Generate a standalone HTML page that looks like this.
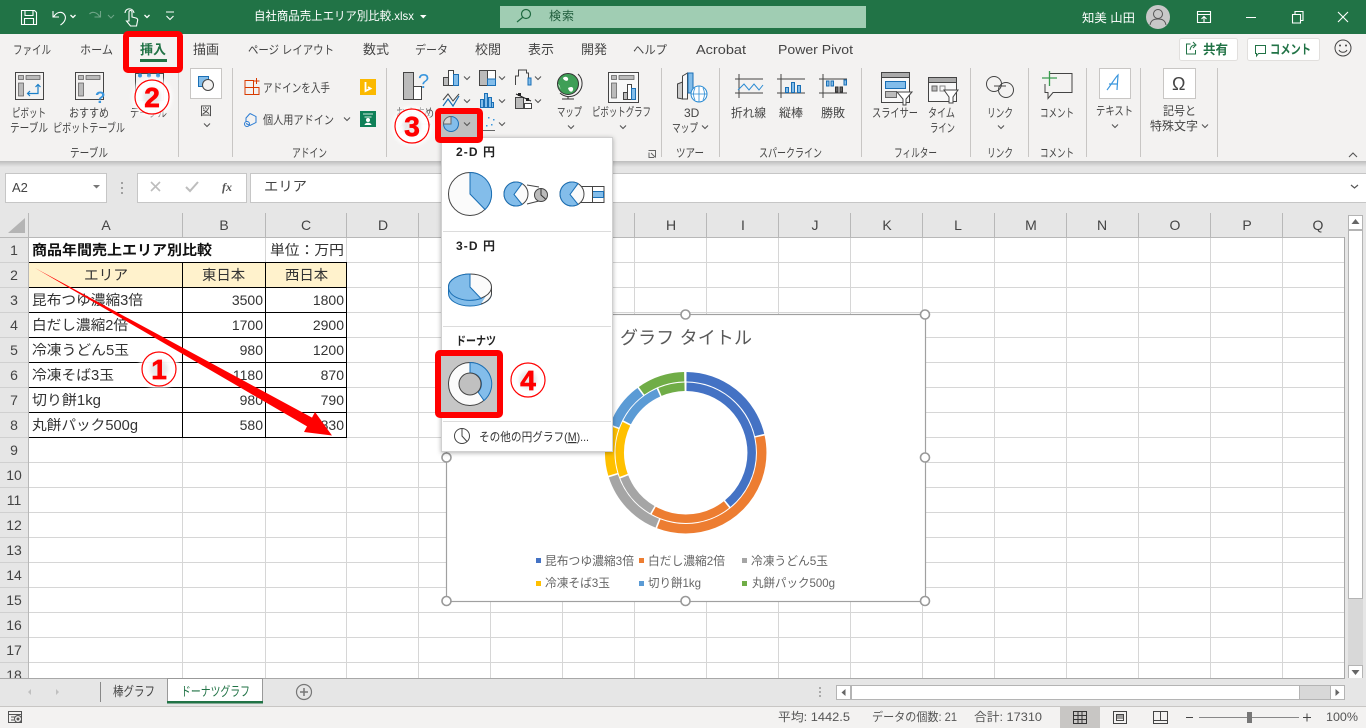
<!DOCTYPE html>
<html lang="ja"><head><meta charset="utf-8"><title>Excel</title>
<style>
html,body{margin:0;padding:0;width:1366px;height:728px;overflow:hidden;background:#e6e6e6}
svg{display:block;position:absolute;left:0;top:0}
text{font-family:"Liberation Sans","Noto Sans CJK JP",sans-serif;white-space:pre}
.r{font-size:12px;fill:#444}
.k{font-size:13px;fill:#444}
.w{font-size:12px;fill:#fff}
.c{font-size:14.4px;fill:#333}
.n{font-size:14px;fill:#333;text-anchor:end}
.h{font-size:14px;fill:#444;text-anchor:middle}
.l{font-size:12px;fill:#666}
.s{font-size:12px;fill:#555}
.m{font-size:12px;fill:#222;font-weight:bold}
.d{font-size:28px;fill:#f00;stroke:#f00;stroke-width:.7px;font-weight:bold;text-anchor:middle}
.ic{fill:none;stroke:#444;stroke-width:1}
.g{fill:#bbb;stroke:#444;stroke-width:1}
.b{fill:#83bdea;stroke:#1a6fb5;stroke-width:1}
</style></head><body>
<svg width="1366" height="728" viewBox="0 0 1366 728" xmlns="http://www.w3.org/2000/svg">
<defs>
<path id="ch" d="M-3-1.500 0 1.500 3-1.500" fill="none" stroke="#555" stroke-width="1.100"/>
<path id="chw" d="M-2.500-1 0 1.500 2.500-1" fill="none" stroke="#fff" stroke-width="1.300"/>
<filter id="sh" x="-10%" y="-10%" width="120%" height="120%"><feDropShadow dx="0" dy="1" stdDeviation="2.500" flood-color="#000" flood-opacity=".3"/></filter>
<filter id="bl" x="-30%" y="-30%" width="160%" height="160%"><feGaussianBlur stdDeviation="1.500"/></filter>
<linearGradient id="rs" x1="0" y1="0" x2="0" y2="1"><stop offset="0" stop-color="#bdbdbd"/><stop offset="1" stop-color="#e6e6e6"/></linearGradient>
</defs>

<!-- base -->
<rect width="1366" height="728" fill="#e6e6e6"/>
<rect x="29" y="238" width="1316" height="440" fill="#fff"/>

<!-- gridlines -->
<g stroke="#d6d6d6" stroke-width="1" fill="none">
<path d="M29 262.500H1345M29 287.500H1345M29 312.500H1345M29 337.500H1345M29 362.500H1345M29 387.500H1345M29 412.500H1345M29 437.500H1345M29 462.500H1345M29 487.500H1345M29 512.500H1345M29 537.500H1345M29 562.500H1345M29 587.500H1345M29 612.500H1345M29 637.500H1345M29 662.500H1345"/>
<path d="M182.500 238V678M265.500 238V678M346.500 238V678M418.500 238V678M490.500 238V678M562.500 238V678M634.500 238V678M706.500 238V678M778.500 238V678M850.500 238V678M922.500 238V678M994.500 238V678M1066.500 238V678M1138.500 238V678M1210.500 238V678M1282.500 238V678"/>
</g>

<!-- headers -->
<rect x="0" y="213" width="1345" height="25" fill="#e6e6e6"/>
<rect x="0" y="238" width="29" height="440" fill="#e6e6e6"/>
<path d="M25 233H8L25 218Z" fill="#b4b4b4"/>
<g stroke="#b8b8b8" fill="none">
<path d="M28.500 213V678M0 237.500H1345M182.500 213V237M265.500 213V237M346.500 213V237M418.500 213V237M490.500 213V237M562.500 213V237M634.500 213V237M706.500 213V237M778.500 213V237M850.500 213V237M922.500 213V237M994.500 213V237M1066.500 213V237M1138.500 213V237M1210.500 213V237M1282.500 213V237"/>
<path d="M0 262.500H28M0 287.500H28M0 312.500H28M0 337.500H28M0 362.500H28M0 387.500H28M0 412.500H28M0 437.500H28M0 462.500H28M0 487.500H28M0 512.500H28M0 537.500H28M0 562.500H28M0 587.500H28M0 612.500H28M0 637.500H28M0 662.500H28" stroke="#d0d0d0"/>
</g>
<g>
<text class="h" x="106" y="230">A</text><text class="h" x="224" y="230">B</text><text class="h" x="306" y="230">C</text><text class="h" x="383" y="230">D</text>
<text class="h" x="671" y="230">H</text><text class="h" x="743" y="230">I</text><text class="h" x="815" y="230">J</text><text class="h" x="887" y="230">K</text><text class="h" x="958" y="230">L</text><text class="h" x="1031" y="230">M</text><text class="h" x="1102" y="230">N</text><text class="h" x="1175" y="230">O</text><text class="h" x="1247" y="230">P</text><text class="h" x="1318" y="230">Q</text>
<text class="h" x="14" y="255">1</text><text class="h" x="14" y="280">2</text><text class="h" x="14" y="305">3</text><text class="h" x="14" y="330">4</text><text class="h" x="14" y="355">5</text><text class="h" x="14" y="380">6</text><text class="h" x="14" y="405">7</text><text class="h" x="14" y="430">8</text><text class="h" x="14" y="455">9</text><text class="h" x="14" y="480">10</text><text class="h" x="14" y="505">11</text><text class="h" x="14" y="530">12</text><text class="h" x="14" y="555">13</text><text class="h" x="14" y="580">14</text><text class="h" x="14" y="605">15</text><text class="h" x="14" y="630">16</text><text class="h" x="14" y="655">17</text><text class="h" x="14" y="680">18</text>
</g>

<!-- table -->
<rect x="29" y="263" width="318" height="24" fill="#fff2cc"/>
<rect x="29" y="238" width="318" height="24" fill="#fff"/>
<path d="M265.500 238V262M346.500 238V262" stroke="#d6d6d6" fill="none"/>
<path d="M29 262.500H346.500M29 287.500H346.500M29 312.500H346.500M29 337.500H346.500M29 362.500H346.500M29 387.500H346.500M29 412.500H346.500M29 437.500H346.500M182.500 262V438M265.500 262V438M346.500 262V438" stroke="#000" fill="none"/>
<text class="c" x="32" y="255" font-weight="bold" style="fill:#111" textLength="180" lengthAdjust="spacingAndGlyphs">商品年間売上エリア別比較</text>
<text class="c" x="270" y="255" textLength="74" lengthAdjust="spacingAndGlyphs">単位：万円</text>
<text class="c" x="84" y="280" textLength="44" lengthAdjust="spacingAndGlyphs">エリア</text>
<text class="c" x="202" y="280">東日本</text><text class="c" x="285" y="280">西日本</text>
<text class="c" x="32" y="305" textLength="111" lengthAdjust="spacingAndGlyphs">昆布つゆ濃縮3倍</text>
<text class="c" x="32" y="330" textLength="96" lengthAdjust="spacingAndGlyphs">白だし濃縮2倍</text>
<text class="c" x="32" y="355" textLength="97" lengthAdjust="spacingAndGlyphs">冷凍うどん5玉</text>
<text class="c" x="32" y="380" textLength="82" lengthAdjust="spacingAndGlyphs">冷凍そば3玉</text>
<text class="c" x="32" y="405" textLength="69" lengthAdjust="spacingAndGlyphs">切り餅1kg</text>
<text class="c" x="32" y="430" textLength="106" lengthAdjust="spacingAndGlyphs">丸餅パック500g</text>
<g>
<text class="n" x="263" y="305">3500</text><text class="n" x="344" y="305">1800</text>
<text class="n" x="263" y="330">1700</text><text class="n" x="344" y="330">2900</text>
<text class="n" x="263" y="355">980</text><text class="n" x="344" y="355">1200</text>
<text class="n" x="263" y="380">1180</text><text class="n" x="344" y="380">870</text>
<text class="n" x="263" y="405">980</text><text class="n" x="344" y="405">790</text>
<text class="n" x="263" y="430">580</text><text class="n" x="344" y="430">830</text>
</g>

<!-- chart -->
<rect x="446.500" y="314.500" width="479" height="287" fill="#fff" stroke="#a0a0a0" stroke-width="1.200"/>
<text x="620" y="344" font-size="18px" fill="#595959" textLength="132" lengthAdjust="spacing">グラフ タイトル</text>
<g fill="none" transform="rotate(-90 685.700 452.700)">
<g stroke-width="9.500">
<circle cx="685.700" cy="452.700" r="76" pathLength="360" stroke="#4472c4" stroke-dasharray="76 284" stroke-dashoffset="-0.600"/>
<circle cx="685.700" cy="452.700" r="76" pathLength="360" stroke="#ed7d31" stroke-dasharray="123.200 236.800" stroke-dashoffset="-77.800"/>
<circle cx="685.700" cy="452.700" r="76" pathLength="360" stroke="#a5a5a5" stroke-dasharray="50.300 309.700" stroke-dashoffset="-202.200"/>
<circle cx="685.700" cy="452.700" r="76" pathLength="360" stroke="#ffc000" stroke-dasharray="36.100 323.900" stroke-dashoffset="-253.700"/>
<circle cx="685.700" cy="452.700" r="76" pathLength="360" stroke="#5b9bd5" stroke-dasharray="32.700 327.300" stroke-dashoffset="-291"/>
<circle cx="685.700" cy="452.700" r="76" pathLength="360" stroke="#70ad47" stroke-dasharray="34.400 325.600" stroke-dashoffset="-324.900"/>
</g>
<g stroke-width="8.500">
<circle cx="685.700" cy="452.700" r="66" pathLength="360" stroke="#4472c4" stroke-dasharray="139.900 220.100" stroke-dashoffset="-0.700"/>
<circle cx="685.700" cy="452.700" r="66" pathLength="360" stroke="#ed7d31" stroke-dasharray="67.200 292.800" stroke-dashoffset="-142"/>
<circle cx="685.700" cy="452.700" r="66" pathLength="360" stroke="#a5a5a5" stroke-dasharray="38.200 321.800" stroke-dashoffset="-210.600"/>
<circle cx="685.700" cy="452.700" r="66" pathLength="360" stroke="#ffc000" stroke-dasharray="46.200 313.800" stroke-dashoffset="-250.200"/>
<circle cx="685.700" cy="452.700" r="66" pathLength="360" stroke="#5b9bd5" stroke-dasharray="38.200 321.800" stroke-dashoffset="-297.800"/>
<circle cx="685.700" cy="452.700" r="66" pathLength="360" stroke="#70ad47" stroke-dasharray="22 338" stroke-dashoffset="-337.400"/>
</g>
</g>
<rect x="536" y="558" width="5" height="5" fill="#4472c4"/><text class="l" x="545" y="565" textLength="89" lengthAdjust="spacingAndGlyphs">昆布つゆ濃縮3倍</text>
<rect x="639" y="558" width="5" height="5" fill="#ed7d31"/><text class="l" x="648" y="565" textLength="77" lengthAdjust="spacingAndGlyphs">白だし濃縮2倍</text>
<rect x="742" y="558" width="5" height="5" fill="#a5a5a5"/><text class="l" x="751" y="565" textLength="77" lengthAdjust="spacingAndGlyphs">冷凍うどん5玉</text>
<rect x="536" y="581" width="5" height="5" fill="#ffc000"/><text class="l" x="545" y="587" textLength="65" lengthAdjust="spacingAndGlyphs">冷凍そば3玉</text>
<rect x="639" y="581" width="5" height="5" fill="#5b9bd5"/><text class="l" x="648" y="587" textLength="53" lengthAdjust="spacingAndGlyphs">切り餅1kg</text>
<rect x="742" y="581" width="5" height="5" fill="#70ad47"/><text class="l" x="752" y="587" textLength="83" lengthAdjust="spacingAndGlyphs">丸餅パック500g</text>
<g fill="#fff" stroke="#999" stroke-width="1.600">
<circle cx="446.500" cy="314.500" r="4.500"/><circle cx="685.500" cy="314.500" r="4.500"/><circle cx="925" cy="314.500" r="4.500"/>
<circle cx="446.500" cy="457.500" r="4.500"/><circle cx="925" cy="457.500" r="4.500"/>
<circle cx="446.500" cy="601" r="4.500"/><circle cx="685.500" cy="601" r="4.500"/><circle cx="925" cy="601" r="4.500"/>
</g>

<!-- vertical scrollbar -->
<rect x="1345" y="213" width="21" height="465" fill="#e6e6e6"/>
<path d="M1344.500 237V678" stroke="#a8a8a8"/>
<rect x="1348.500" y="215.500" width="14" height="14" fill="#fff" stroke="#b4b4b4"/>
<path d="M1351.500 224h8l-4-5z" fill="#666"/>
<rect x="1348" y="230" width="15" height="435" fill="#d8d8d8"/>
<rect x="1348.500" y="230.500" width="14" height="368" fill="#fff" stroke="#b4b4b4"/>
<rect x="1348.500" y="665.500" width="14" height="13" fill="#fff" stroke="#b4b4b4"/>
<path d="M1351.500 670h8l-4 5z" fill="#666"/>

<!-- formula bar -->
<rect x="0" y="161" width="1366" height="52" fill="#e6e6e6"/>
<rect x="0" y="161" width="1366" height="6" fill="url(#rs)"/>
<rect x="5.500" y="173.500" width="101" height="29" fill="#fff" stroke="#c6c6c6"/>
<text x="12" y="192" font-size="13px" fill="#444">A2</text>
<path d="M93 185h7l-3.500 3.500z" fill="#777"/>
<g fill="#a0a0a0"><rect x="121" y="182" width="2" height="2"/><rect x="121" y="187" width="2" height="2"/><rect x="121" y="192" width="2" height="2"/></g>
<rect x="137.500" y="173.500" width="109" height="29" fill="#fff" stroke="#c6c6c6"/>
<path d="M151 182l9 9M160 182l-9 9" stroke="#bdbdbd" stroke-width="1.600" fill="none"/>
<path d="M186 187l4 4 8-9" stroke="#bdbdbd" stroke-width="2" fill="none"/>
<text x="222" y="191" font-size="12px" fill="#555" font-weight="bold" font-style="italic" style="font-family:'Liberation Serif',serif">fx</text>
<rect x="250.500" y="173.500" width="1120" height="29" fill="#fff" stroke="#c6c6c6"/>
<text x="264" y="191" font-size="13.500px" fill="#444" textLength="43" lengthAdjust="spacingAndGlyphs">エリア</text>
<path d="M1351 185l3.500 3 3.500-3" stroke="#555" fill="none" stroke-width="1.200"/>

<!-- ribbon -->
<rect x="0" y="34" width="1366" height="127" fill="#f3f2f1"/>
<g stroke="#c8c6c4" fill="none">
<path d="M178.500 68V157M232.500 68V157M386.500 68V157M661.500 68V157M719.500 68V157M861.500 68V157M970.500 68V157M1028.500 68V157M1086.500 68V157M1140.500 68V157M1217.500 68V157"/>
</g>
<!-- title bar -->
<rect x="0" y="0" width="1366" height="34" fill="#217346"/>
<rect x="500" y="6" width="366" height="22" fill="#a0cdb3"/>
<g fill="none" stroke="#fff" stroke-width="1.100">
<path d="M21.500 10.500h13l2 2v12h-15zM25 10.500v5h8v-5M24.500 24.500v-6h9v6"/>
<path d="M53 11v6h6M53.500 17c3-5 8-6 10.500-3 3 3.500 1 8-3.500 11"/>
<path d="M129 21v-9a1.500 1.500 0 0 1 3 0v5l4 1c1.500.5 2 1.500 1.500 3l-1 5h-6l-4-5zM125 13c0-5 8-6 9 0"/>
<path d="M166 12h8M166.500 16l3.500 3.500 3.500-3.500"/>
<path d="M1197.500 11.500h13v11h-13zM1197.500 14.500h13M1204 22v-5M1201.500 19l2.500-2.500 2.500 2.500"/>
<path d="M1246 17.500h10M1292.500 14.500h8v8.500h-8zM1295 14.500v-3h8v9h-2.500M1338 12l10 10M1348 12l-10 10"/>
</g>
<path d="M100.500 11v6h-6M100 17c-3-5-8-6-10.500-3" fill="none" stroke="#6fa588" stroke-width="1.100"/>
<use href="#chw" x="73" y="16"/><use href="#chw" x="147" y="16"/>
<path d="M420 15h6.500l-3.250 3.500z" fill="#fff"/>
<path d="M108 15l3 3 3-3" stroke="#6fa588" fill="none"/>
<text class="w" x="254" y="20" textLength="160" lengthAdjust="spacingAndGlyphs">自社商品売上エリア別比較.xlsx</text>
<circle cx="526" cy="14" r="4.500" fill="none" stroke="#1f6a40" stroke-width="1.200"/><path d="M522.500 17.500L517 22" stroke="#1f6a40" stroke-width="1.200"/>
<text x="549" y="20" font-size="12px" fill="#1f5c3b" textLength="25">検索</text>
<text class="w" x="1082" y="22" font-size="13px" textLength="53" lengthAdjust="spacingAndGlyphs">知美 山田</text>
<circle cx="1158" cy="17" r="12" fill="#c8c8c8"/><circle cx="1158" cy="14" r="4.500" fill="none" stroke="#555"/><path d="M1150 25c1-5 4-6 8-6s7 1 8 6" fill="none" stroke="#555"/>

<!-- tabs -->
<g>
<text class="r" x="13" y="54" textLength="38" lengthAdjust="spacingAndGlyphs">ファイル</text>
<text class="r" x="80" y="54" textLength="33" lengthAdjust="spacingAndGlyphs">ホーム</text>
<text x="140" y="54" font-size="13px" fill="#217346" font-weight="bold" textLength="26" lengthAdjust="spacingAndGlyphs">挿入</text>
<rect x="140" y="59" width="27" height="3" fill="#217346"/>
<text class="k" x="193" y="54" textLength="26" lengthAdjust="spacingAndGlyphs">描画</text>
<text class="r" x="248" y="54" textLength="86" lengthAdjust="spacingAndGlyphs">ページ レイアウト</text>
<text class="k" x="363" y="54" textLength="26" lengthAdjust="spacingAndGlyphs">数式</text>
<text class="r" x="415" y="54" textLength="33" lengthAdjust="spacingAndGlyphs">データ</text>
<text class="k" x="475" y="54" textLength="26" lengthAdjust="spacingAndGlyphs">校閲</text>
<text class="k" x="528" y="54" textLength="26" lengthAdjust="spacingAndGlyphs">表示</text>
<text class="k" x="581" y="54" textLength="26" lengthAdjust="spacingAndGlyphs">開発</text>
<text class="r" x="633" y="54" textLength="34" lengthAdjust="spacingAndGlyphs">ヘルプ</text>
<text class="r" x="696" y="54" style="font-size:13px" textLength="50" lengthAdjust="spacingAndGlyphs">Acrobat</text>
<text class="r" x="778" y="54" style="font-size:13px" textLength="75" lengthAdjust="spacingAndGlyphs">Power Pivot</text>
</g>
<rect x="1179.500" y="38.500" width="58" height="22" rx="2" fill="#fff" stroke="#e1dfdd"/>
<path d="M1186.500 47v-3h4M1186.500 47v7h9v-4M1190 50c.5-3 2-5 5-5M1193 42l3 3-3 3" fill="none" stroke="#217346"/>
<text x="1203" y="54" font-size="13px" font-weight="bold" fill="#217346" textLength="25" lengthAdjust="spacingAndGlyphs">共有</text>
<rect x="1247.500" y="38.500" width="72" height="22" rx="2" fill="#fff" stroke="#e1dfdd"/>
<path d="M1255.500 45.500h10v8h-7l-2 2.500v-2.500h-1z" fill="none" stroke="#217346"/>
<text x="1270" y="54" font-size="13px" font-weight="bold" fill="#217346" textLength="41" lengthAdjust="spacingAndGlyphs">コメント</text>
<circle cx="1343" cy="48" r="8" fill="none" stroke="#444"/><path d="M1339 50c1.500 3 6.500 3 8 0" fill="none" stroke="#444"/><circle cx="1340" cy="45.500" r="1" fill="#444"/><circle cx="1346" cy="45.500" r="1" fill="#444"/>

<!-- table group -->
<rect x="15.500" y="72.500" width="28" height="27" class="ic"/>
<g fill="#bbb" stroke="#555" stroke-width=".7"><rect x="18.500" y="75.500" width="5" height="4"/><rect x="26" y="75.500" width="14" height="4"/><rect x="18.500" y="83" width="5" height="13"/></g>
<path d="M28 93.500h10v-8M35.500 87l2.500-2.500 2.500 2.500M30 91l-2.500 2.500 2.500 2.500" fill="none" stroke="#1a7fc8" stroke-width="1.200"/>
<rect x="75.500" y="72.500" width="28" height="27" class="ic"/>
<g fill="#bbb" stroke="#555" stroke-width=".7"><rect x="78.500" y="75.500" width="5" height="4"/><rect x="86" y="75.500" width="14" height="4"/><rect x="78.500" y="83" width="5" height="13"/></g>
<text x="95" y="103" font-size="17px" fill="#3a96dd" font-weight="bold">?</text>
<rect x="135.500" y="73.500" width="28" height="27" class="ic"/>
<g fill="#3a96dd"><circle cx="140" cy="75.500" r="2"/><circle cx="149" cy="75.500" r="2"/><circle cx="158" cy="75.500" r="2"/></g>
<text class="r" x="12" y="117" textLength="34" lengthAdjust="spacingAndGlyphs">ピボット</text>
<text class="r" x="10" y="132" textLength="38" lengthAdjust="spacingAndGlyphs">テーブル</text>
<text class="r" x="69" y="117" textLength="40" lengthAdjust="spacingAndGlyphs">おすすめ</text>
<text class="r" x="53" y="132" textLength="72" lengthAdjust="spacingAndGlyphs">ピボットテーブル</text>
<text class="r" x="130" y="117" textLength="37" lengthAdjust="spacingAndGlyphs">テーブル</text>
<text class="r" x="70" y="157" textLength="38" lengthAdjust="spacingAndGlyphs">テーブル</text>
<!-- illustrations -->
<rect x="190.500" y="68.500" width="31" height="30" fill="#fff" stroke="#c8c6c4"/>
<rect x="198.500" y="76.500" width="10" height="10" fill="#83bdea" stroke="#1a6fb5"/>
<circle cx="208" cy="85" r="5.500" fill="#f3f2f1" stroke="#444"/>
<text class="r" x="200" y="115">図</text><use href="#ch" x="207" y="125"/>
<!-- add-ins -->
<path d="M245 80.500h8.500v14H245zM245 87.500h14v7h-5.500M253.500 87.500V80.500M256.500 78v6M253.500 81h6" fill="none" stroke="#d83b01" stroke-width="1"/>
<text class="r" x="263" y="92" textLength="67" lengthAdjust="spacingAndGlyphs">アドインを入手</text>
<rect x="360" y="79" width="16" height="16" fill="#fbb900"/>
<path d="M365.500 82v9l5-2.500-2.500-1.500" fill="none" stroke="#fff" stroke-width="1.800"/>
<path d="M250 113.500l6 3v6l-6 3-4-2M246 122v-4l4-4.500" fill="none" stroke="#2b7cd3"/><circle cx="247" cy="124" r="2.500" fill="none" stroke="#2b7cd3"/>
<text class="r" x="263" y="124" textLength="71" lengthAdjust="spacingAndGlyphs">個人用アドイン</text>
<use href="#ch" x="347" y="119"/>
<rect x="360" y="111" width="16" height="16" fill="#0f8058"/>
<path d="M363 114h10M364.500 117h7" stroke="#cfe8dd"/><circle cx="368" cy="120" r="2" fill="#fff"/><path d="M364.500 125c.5-3 6.500-3 7 0z" fill="#fff"/>
<text class="r" x="292" y="157" textLength="35" lengthAdjust="spacingAndGlyphs">アドイン</text>
<!-- charts -->
<rect x="403.500" y="72.500" width="10" height="27" class="g"/><rect x="413.500" y="86.500" width="8" height="13" fill="#fff" stroke="#444"/>
<text x="418" y="88" font-size="20px" fill="#3a96dd">?</text>
<text class="r" x="396" y="117" textLength="38" lengthAdjust="spacingAndGlyphs">おすすめ</text>
<text class="r" x="398" y="132" textLength="34" lengthAdjust="spacingAndGlyphs">グラフ</text>
<!-- column -->
<rect x="443.500" y="77.500" width="5" height="8" class="g"/><rect x="448.500" y="70.500" width="5" height="15" fill="#fff" stroke="#444"/><rect x="453.500" y="74.500" width="5" height="11" class="b"/>
<use href="#ch" x="467" y="78"/>
<rect x="479.500" y="70.500" width="16" height="15" fill="#fff" stroke="#444"/><rect x="479.500" y="70.500" width="8" height="15" fill="#bbb" stroke="#444"/><rect x="487.500" y="79" width="8" height="6.500" class="b"/>
<use href="#ch" x="502" y="78"/>
<path d="M515.500 85v-9h3v-6h8v3h2v6" fill="none" stroke="#444"/><path d="M528 78h3v7h-3z" class="b"/><use href="#ch" x="538" y="78"/>
<path d="M443 106l5-7 5 7 6-10" fill="none" stroke="#1a6fb5" stroke-width="1.200"/><path d="M443 100l5-6 5 7 6-7" fill="none" stroke="#444"/>
<use href="#ch" x="467" y="101"/>
<g class="b"><rect x="480.500" y="99.500" width="3" height="8"/><rect x="484.500" y="93.500" width="3" height="14"/><rect x="488.500" y="97.500" width="3" height="10"/><rect x="491.500" y="102.500" width="2" height="5"/></g>
<use href="#ch" x="502" y="101"/>
<rect x="515.500" y="97.500" width="8" height="11" class="g"/><rect x="524.500" y="103.500" width="7" height="5" fill="#fff" stroke="#444"/><path d="M516 94l15 7" stroke="#222" fill="none"/><rect x="518" y="93" width="3" height="3" fill="#222"/><rect x="526" y="98" width="3" height="3" fill="#222"/>
<use href="#ch" x="538" y="101"/>
<g fill="#3a96dd"><rect x="488" y="117" width="1.500" height="1.500"/><rect x="493" y="119" width="1.500" height="1.500"/><rect x="486" y="125" width="1.500" height="1.500"/><rect x="491" y="124" width="1.500" height="1.500"/></g>
<path d="M482 130.500h13" stroke="#666"/><use href="#ch" x="502" y="124"/>
<!-- map -->
<circle cx="568" cy="84" r="10.500" fill="#3f9f57" stroke="#333"/><path d="M563 78c3-3 6 0 5 2s-5 0-5-2zM568 88c3-2 6-1 5 2s-4 2-5-2zM558 84c2 1 2 4 3 6" fill="#fff"/>
<path d="M578 74a13 13 0 0 1-18 19M568 97v2M562 99h12" fill="none" stroke="#333"/>
<text class="r" x="557" y="116" textLength="25" lengthAdjust="spacingAndGlyphs">マップ</text><use href="#ch" x="571" y="127"/>
<rect x="608.500" y="72.500" width="30" height="30" fill="#f8f8f8" stroke="#444"/>
<g fill="#bbb" stroke="#555" stroke-width=".7"><rect x="611.500" y="75.500" width="5" height="4"/><rect x="619" y="75.500" width="15" height="4"/><rect x="611.500" y="83" width="5" height="15"/></g>
<rect x="623.500" y="92.500" width="4" height="7" class="g"/><rect x="627.500" y="84.500" width="4" height="15" fill="#fff" stroke="#444"/><rect x="631.500" y="88.500" width="4" height="11" class="b"/>
<text class="r" x="592" y="116" textLength="59" lengthAdjust="spacingAndGlyphs">ピボットグラフ</text><use href="#ch" x="623" y="127"/>
<path d="M648.500 150.500h7v7M651 153l4.500 4.500M649 152.500v5h5" fill="none" stroke="#666"/>
<!-- 3d map -->
<path d="M677.500 84l5-2v17l-5-1z" fill="#ccc" stroke="#444"/><path d="M682.500 76l5-3v26l-5 0z" fill="#f8f8f8" stroke="#444"/><path d="M688 73h5v20h-5z" fill="#83bdea" stroke="#1a6fb5"/>
<circle cx="699" cy="94" r="8" fill="#fff" stroke="#2a8bd3"/><path d="M691 94h16M699 86v16M695 88c-2 4-2 8 0 12M703 88c2 4 2 8 0 12" fill="none" stroke="#2a8bd3" stroke-width=".8"/>
<text class="r" x="684" y="117">3D</text>
<text class="r" x="672" y="132" textLength="26" lengthAdjust="spacingAndGlyphs">マップ</text><use href="#ch" x="705" y="127"/>
<text class="r" x="676" y="157" textLength="28" lengthAdjust="spacingAndGlyphs">ツアー</text>
<!-- sparklines -->
<path d="M735 79h28M735 93h28M739 74v24M777 79h28M777 93h28M781 74v24M819 79h28M819 93h28M823 74v24" stroke="#444" fill="none"/>
<path d="M738 90l6-6 5 6 5-6 5 6 4-5" stroke="#2a8bd3" fill="none"/>
<g class="b"><rect x="785.500" y="87.500" width="3" height="5"/><rect x="791.500" y="82.500" width="3" height="10"/><rect x="797.500" y="85.500" width="3" height="7"/></g>
<g><rect x="826.500" y="81" width="2.500" height="5" class="b"/><rect x="831" y="81" width="2.500" height="5" class="b"/><rect x="835.500" y="87" width="2.500" height="5" fill="#666" stroke="#333"/><rect x="840" y="87" width="2.500" height="5" fill="#666" stroke="#333"/><rect x="844" y="80" width="2.500" height="5" class="b"/></g>
<text class="r" x="731" y="117" textLength="35" lengthAdjust="spacingAndGlyphs">折れ線</text>
<text class="r" x="779" y="117" textLength="24">縦棒</text>
<text class="r" x="821" y="117" textLength="24">勝敗</text>
<text class="r" x="759" y="157" textLength="63" lengthAdjust="spacingAndGlyphs">スパークライン</text>
<!-- filters -->
<rect x="881.500" y="72.500" width="28" height="30" fill="#f8f8f8" stroke="#444"/><rect x="881.500" y="72.500" width="28" height="5" fill="#aaa" stroke="#444"/>
<rect x="885.500" y="81.500" width="20" height="7" class="b"/><rect x="885.500" y="91.500" width="11" height="6" fill="#bbb" stroke="#666"/>
<path d="M897 92h15l-6 7v6h-3v-6z" fill="#fff" stroke="#444"/>
<rect x="928.500" y="77.500" width="28" height="24" fill="#f8f8f8" stroke="#444"/><rect x="928.500" y="77.500" width="28" height="5" fill="#aaa" stroke="#444"/>
<rect x="932" y="86" width="5" height="5" fill="#bbb" stroke="#666"/><rect x="940" y="86" width="5" height="5" fill="none" stroke="#888"/>
<path d="M944 90h14l-5 7v6h-4v-6z" fill="#fff" stroke="#444"/>
<text class="r" x="872" y="117" textLength="46" lengthAdjust="spacingAndGlyphs">スライサー</text>
<text class="r" x="928" y="117" textLength="27" lengthAdjust="spacingAndGlyphs">タイム</text>
<text class="r" x="930" y="132" textLength="25" lengthAdjust="spacingAndGlyphs">ライン</text>
<text class="r" x="894" y="157" textLength="43" lengthAdjust="spacingAndGlyphs">フィルター</text>
<!-- link -->
<circle cx="994" cy="84" r="7.500" fill="none" stroke="#444"/><circle cx="1006" cy="90" r="7.500" fill="none" stroke="#444"/><path d="M994 86h12" stroke="#444"/>
<text class="r" x="987" y="117" textLength="26" lengthAdjust="spacingAndGlyphs">リンク</text><use href="#ch" x="1001" y="127"/>
<text class="r" x="987" y="157" textLength="26" lengthAdjust="spacingAndGlyphs">リンク</text>
<!-- comment -->
<path d="M1045 84v8.500h3v6l5-6h19v-19h-23" fill="none" stroke="#444"/><path d="M1042 78h15M1049.500 71v15" stroke="#3a9c4f" stroke-width="1.300" fill="none"/>
<text class="r" x="1040" y="117" textLength="34" lengthAdjust="spacingAndGlyphs">コメント</text>
<text class="r" x="1040" y="157" textLength="34" lengthAdjust="spacingAndGlyphs">コメント</text>
<!-- text / symbols -->
<rect x="1099.500" y="68.500" width="31" height="30" fill="#fff" stroke="#c8c6c4"/>
<path d="M1107 90c4-5 8-12 11-15l-1 15M1109 84h8" stroke="#3a96dd" fill="none" stroke-width="1.200"/>
<text class="r" x="1096" y="115" textLength="37" lengthAdjust="spacingAndGlyphs">テキスト</text><use href="#ch" x="1115" y="126"/>
<rect x="1163.500" y="68.500" width="32" height="30" fill="#fff" stroke="#c8c6c4"/>
<text x="1172" y="90" font-size="18px" fill="#444">Ω</text>
<text class="r" x="1163" y="115" textLength="33" lengthAdjust="spacingAndGlyphs">記号と</text>
<text class="r" x="1150" y="130" textLength="48">特殊文字</text><use href="#ch" x="1205" y="126"/>
<path d="M1349 157l4-4 4 4" fill="none" stroke="#555" stroke-width="1.100"/>

<!-- sheet tabs -->
<rect x="0" y="678" width="1366" height="28" fill="#e6e6e6"/>
<path d="M0 678.500H168M262 678.500H1345" stroke="#a8a8a8"/>
<path d="M0 706.500H1366" stroke="#c8c6c4"/>
<path d="M31 689v6l-3-3zM56 689v6l3-3z" fill="#c0c0c0"/>
<path d="M100.500 682v20" stroke="#888"/>
<text x="113" y="696" font-size="13px" fill="#444" textLength="42" lengthAdjust="spacingAndGlyphs">棒グラフ</text>
<path d="M167.500 702V678.500H262.500V702" fill="#fff" stroke="#999"/>
<rect x="167" y="701" width="96" height="2.500" fill="#217346"/>
<text x="181" y="696" font-size="13px" fill="#217346" textLength="69" lengthAdjust="spacingAndGlyphs">ドーナツグラフ</text>
<circle cx="304" cy="692" r="7.500" fill="none" stroke="#777" stroke-width="1.200"/><path d="M300 692h8M304 688v8" stroke="#777" stroke-width="1.500"/>
<g fill="#aaa"><rect x="819" y="687" width="2" height="2"/><rect x="819" y="691" width="2" height="2"/><rect x="819" y="695" width="2" height="2"/></g>
<rect x="836.500" y="685.500" width="508" height="14" fill="#d8d8d8" stroke="#b4b4b4"/>
<rect x="836.500" y="685.500" width="14" height="14" fill="#fff" stroke="#b4b4b4"/><path d="M845.500 689v7l-4-3.500z" fill="#666"/>
<rect x="851.500" y="685.500" width="448" height="14" fill="#fff" stroke="#b4b4b4"/>
<rect x="1330.500" y="685.500" width="14" height="14" fill="#fff" stroke="#b4b4b4"/><path d="M1335.500 689v7l4-3.500z" fill="#666"/>

<!-- status bar -->
<rect x="0" y="707" width="1366" height="21" fill="#f3f2f1"/>
<rect x="8.500" y="711.500" width="13" height="11" fill="none" stroke="#555"/><path d="M8.500 714.500h13M11 717h4M11 720h3" stroke="#555" fill="none"/><circle cx="18" cy="719" r="3.500" fill="#f3f2f1" stroke="#555"/><circle cx="18" cy="719" r="1.500" fill="#555"/>
<text class="s" x="778" y="721" textLength="72" lengthAdjust="spacingAndGlyphs">平均: 1442.5</text>
<text class="s" x="872" y="721" textLength="85" lengthAdjust="spacingAndGlyphs">データの個数: 21</text>
<text class="s" x="974" y="721" textLength="68" lengthAdjust="spacingAndGlyphs">合計: 17310</text>
<rect x="1060" y="707" width="40" height="21" fill="#c8c6c4"/>
<path d="M1073.500 711.500h13v12h-13zM1073.500 715.500h13M1073.500 719.500h13M1078 711.500v12M1082 711.500v12" fill="none" stroke="#333"/>
<path d="M1113.500 711.500h13v12h-13zM1116.500 714.500h7v6h-7zM1117 716h6M1117 718h6" fill="none" stroke="#444"/>
<path d="M1153.500 711.500h14v12h-14zM1153.500 720.500h14M1160.500 711.500v9" fill="none" stroke="#444"/>
<path d="M1199 717.500h100" stroke="#888" fill="none"/><path d="M1186 717.500h7M1303 717.500h8M1307 713.500v8" stroke="#444" fill="none"/>
<rect x="1247" y="712" width="5" height="11" fill="#777"/>
<text class="s" x="1326" y="721" textLength="32" lengthAdjust="spacingAndGlyphs">100%</text>

<!-- dropdown menu -->
<rect x="441" y="137" width="172" height="315" fill="#fff" filter="url(#sh)"/>
<rect x="441.500" y="137.500" width="171" height="314" fill="#fff" stroke="#d0d0d0"/>
<path d="M443 231.500H611M443 326.500H611M443 421.500H611" stroke="#dcdcdc"/>
<text class="m" x="456" y="156" textLength="39">2-D 円</text>
<text class="m" x="456" y="250" textLength="39">3-D 円</text>
<text class="m" x="456" y="345" textLength="40" lengthAdjust="spacingAndGlyphs">ドーナツ</text>
<!-- pie -->
<circle cx="470" cy="194" r="21.500" fill="#fbfbfb" stroke="#444"/>
<path d="M470 194V172.500A21.500 21.500 0 0 1 485 209.500z" fill="#83bdea" stroke="#1a6fb5"/>
<!-- pie of pie -->
<path d="M527 185l12 2M527 204l12-3" fill="none" stroke="#444"/>
<circle cx="516" cy="194" r="12" fill="#fbfbfb" stroke="#444"/>
<path d="M522 183.600A12 12 0 1 0 522 204.400L514 194.500z" fill="#83bdea" stroke="#1a6fb5"/>
<circle cx="541" cy="195" r="6.500" fill="#bbb" stroke="#444"/><path d="M541 188.500v6.500l4.500 4" fill="none" stroke="#333"/>
<!-- bar of pie -->
<path d="M580 186.500h24v16h-24" fill="#fff" stroke="#444"/>
<circle cx="572" cy="194" r="12" fill="#fbfbfb" stroke="#444"/>
<path d="M578 183.600A12 12 0 1 0 578 204.400L570 194.500z" fill="#83bdea" stroke="#1a6fb5"/>
<rect x="592.500" y="191.500" width="11" height="6" fill="#83bdea" stroke="#1a6fb5"/>
<path d="M592.500 186.500v16" stroke="#444"/>
<!-- 3d pie -->
<path d="M448.500 287v6.500c0 7 9.500 12.500 21.500 12.500s21.500-5.500 21.500-12.500V287" fill="#83bdea" stroke="#1a6fb5"/>
<path d="M481 304c6-2 10.500-6 10.500-10.500V287" fill="#fbfbfb" stroke="#444"/>
<ellipse cx="470" cy="287" rx="21.500" ry="13" fill="#fbfbfb" stroke="#444"/>
<path d="M470 274A21.500 13 0 0 0 448.500 287 21.500 13 0 0 0 481 298.500L470 287z" fill="#83bdea" stroke="#1a6fb5"/>
<!-- donut -->
<rect x="441" y="356" width="57" height="57" fill="#c6c6c6"/>
<circle cx="470" cy="384" r="21.500" fill="#fbfbfb" stroke="#444"/>
<path d="M470 362.500A21.500 21.500 0 0 1 484 400.500L478 392A11 11 0 0 0 470 373z" fill="#83bdea" stroke="#1a6fb5"/>
<circle cx="470" cy="384" r="11" fill="#c0c0c0" stroke="#444"/>
<!-- more -->
<circle cx="462" cy="436" r="7.500" fill="none" stroke="#444"/><path d="M462 428.500V436l5 5.500" fill="none" stroke="#444"/>
<text x="479" y="441" font-size="12px" fill="#333" textLength="110" lengthAdjust="spacingAndGlyphs">その他の円グラフ(<tspan text-decoration="underline">M</tspan>)...</text>

<!-- ribbon pie highlighted -->
<rect x="440" y="113" width="38" height="25" fill="#c0c0c0"/>
<circle cx="451" cy="124" r="7.500" fill="#83bdea" stroke="#1a6fb5"/>
<path d="M451 116.500v7.500h-7.500a7.500 7.500 0 0 1 7.500-7.500z" fill="#d4d4d4" stroke="#666"/>
<use href="#ch" x="467" y="124"/>

<!-- red boxes -->
<rect x="126" y="34" width="54" height="36" rx="2" fill="none" stroke="#f00" stroke-width="6"/>
<rect x="438" y="111" width="42" height="29" rx="2" fill="none" stroke="#f00" stroke-width="6"/>
<rect x="438" y="353" width="62" height="62" rx="2" fill="none" stroke="#f00" stroke-width="6"/>

<!-- arrow -->
<path d="M35 268L312 417.600 315 412 332 435.500 304 432 307 426.400Z" fill="#f00"/>

<!-- circled numbers -->
<g>
<circle cx="152" cy="97" r="20.500" fill="#fff" opacity=".7" filter="url(#bl)"/><circle cx="152" cy="97" r="17.500" fill="#fff" opacity=".9"/><circle cx="152" cy="97" r="9" fill="#aaa" opacity=".25" filter="url(#bl)"/><circle cx="152" cy="97" r="17" fill="none" stroke="#f00" stroke-width="1.200"/><text class="d" x="152" y="107">2</text>
<circle cx="412" cy="126" r="20.500" fill="#fff" opacity=".7" filter="url(#bl)"/><circle cx="412" cy="126" r="17.500" fill="#fff" opacity=".9"/><circle cx="412" cy="126" r="9" fill="#aaa" opacity=".25" filter="url(#bl)"/><circle cx="412" cy="126" r="17" fill="none" stroke="#f00" stroke-width="1.200"/><text class="d" x="412" y="136">3</text>
<circle cx="159" cy="369" r="20.500" fill="#fff" opacity=".7" filter="url(#bl)"/><circle cx="159" cy="369" r="17.500" fill="#fff" opacity=".9"/><circle cx="159" cy="369" r="9" fill="#aaa" opacity=".25" filter="url(#bl)"/><circle cx="159" cy="369" r="17" fill="none" stroke="#f00" stroke-width="1.200"/><text class="d" x="159" y="379">1</text>
<circle cx="528" cy="380" r="20.500" fill="#fff" opacity=".7" filter="url(#bl)"/><circle cx="528" cy="380" r="17.500" fill="#fff" opacity=".9"/><circle cx="528" cy="380" r="9" fill="#aaa" opacity=".25" filter="url(#bl)"/><circle cx="528" cy="380" r="17" fill="none" stroke="#f00" stroke-width="1.200"/><text class="d" x="528" y="390">4</text>
</g>
</svg>
</body></html>
